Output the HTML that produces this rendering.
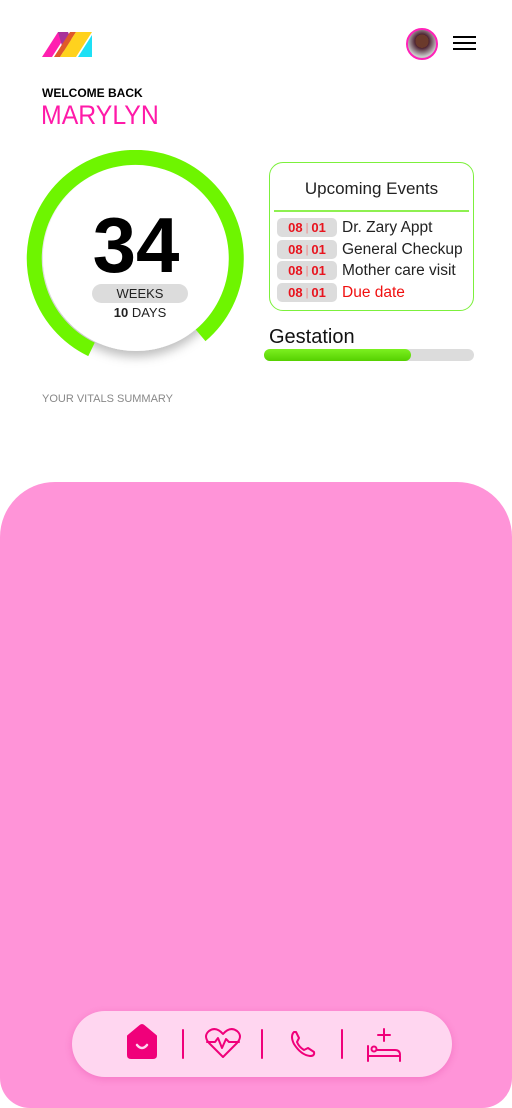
<!DOCTYPE html>
<html><head><meta charset="utf-8"><style>
*{margin:0;padding:0;box-sizing:border-box}
body{width:512px;height:1108px;background:#fff;position:relative;overflow:hidden;font-family:"Liberation Sans",sans-serif}
.abs{position:absolute}
.ev{position:absolute;left:277px;height:19px;display:flex;align-items:center}
.date{width:60px;height:19px;background:#dcdcdc;border-radius:5px;color:#e8141e;font-weight:bold;font-size:13px;display:flex;align-items:center;justify-content:center}
.date i{font-style:normal;color:#f08080;font-weight:normal;margin:0 3px;font-size:11px}
.lbl{margin-left:5px;font-size:15.5px;color:#222}
</style></head><body>
<svg class="abs" style="left:42px;top:31px" width="52" height="27" viewBox="0 0 52 27">
<polygon points="0,26 16,1 26,1 10,26" fill="#ff1fb0"/>
<polygon points="16,1 26,1 30,10 22,22" fill="#a8329a"/>
<polygon points="12,26 28,1 34,1 18,26" fill="#e0592a"/>
<polygon points="18,26 34,1 50,1 34,26" fill="#ffd21e"/>
<polygon points="36,26 50,4 50,26" fill="#1ee0f5"/>
</svg>
<div class="abs" style="left:406px;top:28px;width:32px;height:32px;border-radius:50%;border:2px solid #ff22b8;background:radial-gradient(circle at 50% 40%,#6b3a2c 0 30%,#4a2030 31%,#c8c8c8 70%)"></div>
<div class="abs" style="left:453px;top:36px;width:23px;height:2px;background:#000"></div>
<div class="abs" style="left:453px;top:42px;width:23px;height:2px;background:#000"></div>
<div class="abs" style="left:453px;top:48px;width:23px;height:2px;background:#000"></div>
<div class="abs" style="left:42px;top:86px;font-size:12px;font-weight:bold;color:#000">WELCOME BACK</div>
<div class="abs" style="left:41px;top:100px;font-size:27px;color:#ff1aa8;transform:scaleX(0.92);transform-origin:left">MARYLYN</div>
<svg class="abs" style="left:20px;top:150px" width="240" height="230" viewBox="20 150 240 230">
<defs><filter id="s" x="-20%" y="-20%" width="140%" height="150%"><feDropShadow dx="0" dy="6" stdDeviation="5" flood-color="#000" flood-opacity="0.25"/></filter></defs>
<circle cx="136" cy="258" r="93" fill="#fff" filter="url(#s)"/>
<path d="M 91.5 349.4 A 101 101 0 1 1 200.6 335.4" fill="none" stroke="#6ef500" stroke-width="15"/>
</svg>
<div class="abs" style="left:36px;top:200px;width:200px;text-align:center;font-size:78px;font-weight:bold;color:#000;line-height:90px">34</div>
<div class="abs" style="left:92px;top:284px;width:96px;height:19px;background:#dcdcdc;border-radius:10px;text-align:center;font-size:13px;line-height:19px;color:#222">WEEKS</div>
<div class="abs" style="left:92px;top:305px;width:96px;text-align:center;font-size:13px;color:#222"><b>10</b> DAYS</div>
<div class="abs" style="left:42px;top:393px;font-size:11px;color:#888">YOUR VITALS SUMMARY</div>
<div class="abs" style="left:269px;top:162px;width:205px;height:149px;border:1.5px solid #7cf03c;border-radius:14px"></div>
<div class="abs" style="left:269px;top:179px;width:205px;text-align:center;font-size:17px;color:#222">Upcoming Events</div>
<div class="abs" style="left:274px;top:210px;width:195px;height:2px;background:#8ef050"></div>
<div class="ev" style="top:218px"><div class="date">08<i>|</i>01</div><span class="lbl">Dr. Zary Appt</span></div>
<div class="ev" style="top:240px"><div class="date">08<i>|</i>01</div><span class="lbl">General Checkup</span></div>
<div class="ev" style="top:261px"><div class="date">08<i>|</i>01</div><span class="lbl">Mother care visit</span></div>
<div class="ev" style="top:283px"><div class="date">08<i>|</i>01</div><span class="lbl" style="color:#f01010">Due date</span></div>
<div class="abs" style="left:269px;top:326px;font-size:20px;color:#111">Gestation</div>
<div class="abs" style="left:264px;top:349px;width:210px;height:12px;border-radius:6px;background:#dcdcdc"></div>
<div class="abs" style="left:264px;top:349px;width:147px;height:12px;border-radius:6px;background:linear-gradient(#7cf020,#55d000)"></div>
<div class="abs" style="left:0;top:482px;width:512px;height:626px;background:#ff94d8;border-radius:55px 55px 30px 30px"></div>
<div class="abs" style="left:72px;top:1011px;width:380px;height:66px;background:#ffd6f0;border-radius:33px;box-shadow:0 2px 8px rgba(200,0,120,0.2)"></div>
<svg class="abs" style="left:72px;top:1011px" width="380" height="66" viewBox="0 0 380 66">
<g stroke="#f0007a" stroke-width="2" fill="none" stroke-linecap="round" stroke-linejoin="round">
<path d="M56 25 L68 15 Q70 13 72 15 L84 25 V44 Q84 47 81 47 H59 Q56 47 56 44 Z" fill="#f0007a"/>
<path d="M65 34 Q70 40 75 34" stroke="#ffd6f0" stroke-width="2.5"/>
<line x1="111" y1="19" x2="111" y2="47"/>
<line x1="190" y1="19" x2="190" y2="47"/>
<line x1="270" y1="19" x2="270" y2="47"/>
<path d="M151 46 L137 32 Q131 25 137 20 Q144 15 151 23 Q158 15 165 20 Q171 25 165 32 Z"/>
<path d="M135 31 H143 L146 27 L150 37 L154 28 L157 31 H167"/>
<path d="M222 21 Q218 25 222 33 Q229 44 238 45 Q243 45 242 41 L236 37 L232 39 Q227 36 225 31 L227 27 L224 21 Z"/>
<line x1="296" y1="35" x2="296" y2="50"/>
<path d="M296 45 H328 V50"/>
<path d="M305 39 H323 Q328 39 328 44"/>
<circle cx="302" cy="38" r="2.5"/>
<path d="M312 18 V30 M306 24 H318"/>
</g></svg>
</body></html>
